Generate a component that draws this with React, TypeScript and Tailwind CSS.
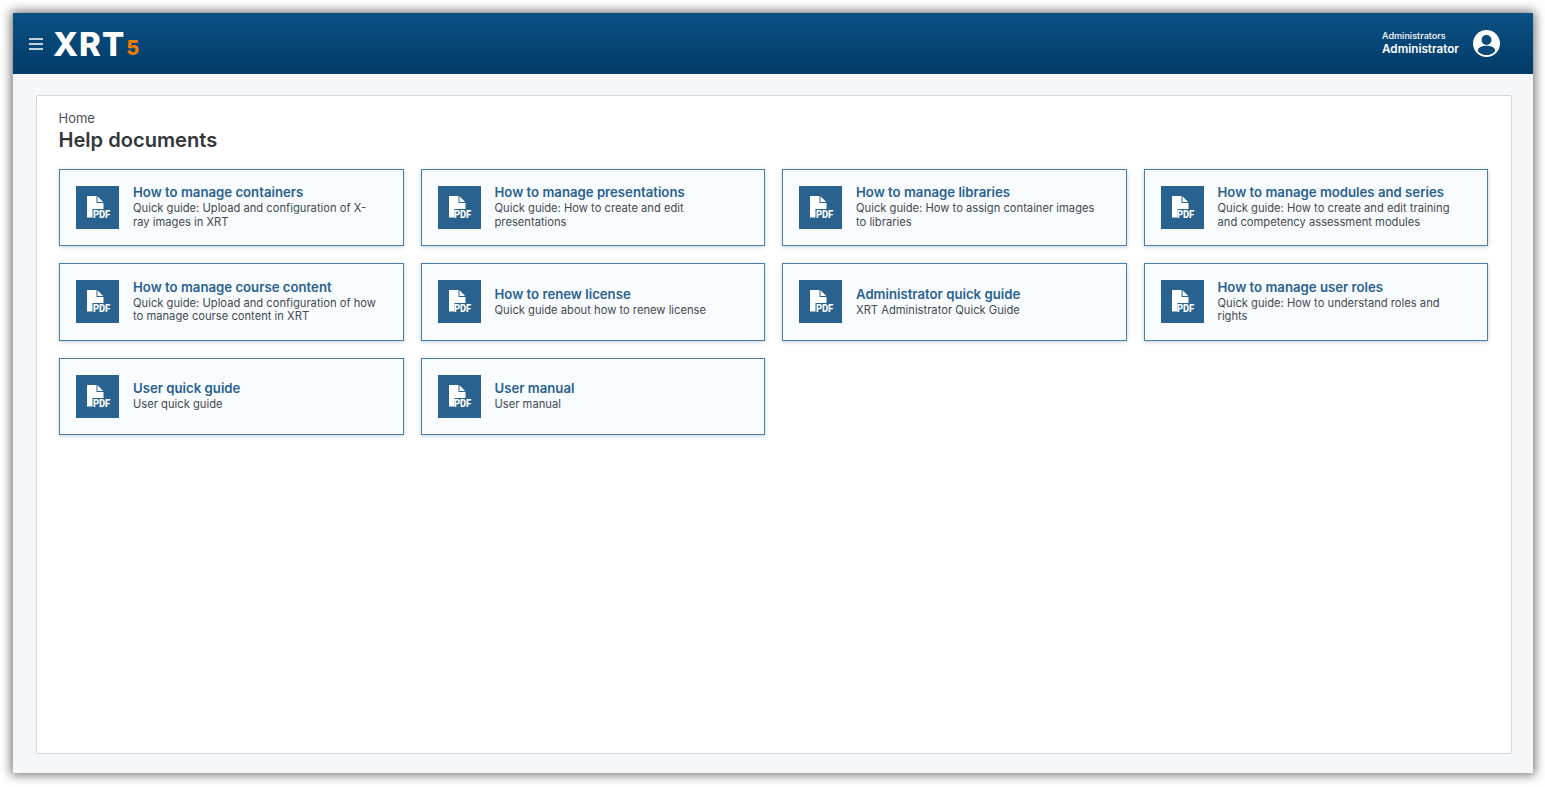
const docs = [
  { t: "How to manage containers", d: "Quick guide: Upload and configuration of X-ray images in XRT" },
  { t: "How to manage presentations", d: "Quick guide: How to create and edit presentations" },
  { t: "How to manage libraries", d: "Quick guide: How to assign container images to libraries" },
  { t: "How to manage modules and series", d: "Quick guide: How to create and edit training and competency assessment modules" },
  { t: "How to manage course content", d: "Quick guide: Upload and configuration of how to manage course content in XRT" },
  { t: "How to renew license", d: "Quick guide about how to renew license" },
  { t: "Administrator quick guide", d: "XRT Administrator Quick Guide" },
  { t: "How to manage user roles", d: "Quick guide: How to understand roles and rights" },
  { t: "User quick guide", d: "User quick guide" },
  { t: "User manual", d: "User manual" },
];

function PdfIcon() {
  return (
    <div className="relative w-[43px] h-[43px] shrink-0 bg-[#2a628f]">
      <svg viewBox="0 0 43 43" className="absolute inset-0 w-full h-full">
        <path d="M11 10h9.5v7h7v6H16.5v8.5H11z" fill="#fff" />
        <path d="M21.5 10.3l5.7 5.7h-5.7z" fill="#fff" />
      </svg>
      <span className="absolute left-[16.5px] top-[23px] text-[10.5px] leading-[11px] font-extrabold text-white tracking-[-0.1px] font-['Roboto',sans-serif] scale-x-90 origin-left">PDF</span>
    </div>
  );
}

function Card({ t, d }: { t: string; d: string }) {
  return (
    <div className="flex items-center gap-[14px] h-[77.5px] pl-[16px] pr-[24px] bg-[#f8fcff] border border-[#4f7ea5] shadow-[0_1px_4px_rgba(42,98,143,0.3)]">
      <PdfIcon />
      <div className="min-w-0 mb-[1px]">
        <div className="text-[13.2px] leading-[16px] font-semibold text-[#2a628f]">{t}</div>
        <div className="text-[11.2px] leading-[13.5px] text-[#444a50] mt-[2px]">{d}</div>
      </div>
    </div>
  );
}

export default function App() {
  return (
    <div className="w-[1545px] h-[787px] p-[13px] bg-white overflow-hidden font-['Inter',sans-serif]">
      <div className="w-[1520px] h-[760px] flex flex-col bg-[#f6f7f9] shadow-[0_0_10px_2px_rgba(0,0,0,0.55)]">
        <header className="h-[61px] shrink-0 flex items-center justify-between pl-[16px] pr-[33px] bg-gradient-to-b from-[#0b5185] to-[#033b68]">
          <div className="flex items-center">
            <svg width="14" height="12" viewBox="0 0 14 12" className="shrink-0">
              <path d="M0 1h14M0 6h14M0 11h14" stroke="#fff" strokeWidth="1.6" />
            </svg>
            <div className="flex items-end ml-[10px] font-extrabold leading-none">
              <span className="text-[33px] leading-[34px] text-white tracking-[1px]">XRT</span>
              <span className="text-[20px] leading-[20px] text-[#ef7d00] ml-[1px] mb-[3px]">5</span>
            </div>
          </div>
          <div className="flex items-center gap-[14px]">
            <div className="text-white">
              <div className="text-[9.1px] leading-[11px] font-medium">Administrators</div>
              <div className="text-[11.7px] leading-[16px] font-semibold">Administrator</div>
            </div>
            <svg width="27" height="27" viewBox="0 0 27 27" className="shrink-0">
              <defs>
                <clipPath id="c"><circle cx="13.5" cy="13.5" r="11.6" /></clipPath>
              </defs>
              <circle cx="13.5" cy="13.5" r="13.5" fill="#fff" />
              <circle cx="13.5" cy="10" r="5" fill="#0a4a7b" />
              <ellipse cx="13.5" cy="20.5" rx="8.7" ry="4.8" fill="#0a4a7b" clipPath="url(#c)" />
            </svg>
          </div>
        </header>
        <main className="flex-1 min-h-0 pt-[21px] pb-[19px] pl-[22.5px] pr-[21px]">
          <div className="h-full bg-white border border-[#d3d6db] rounded-[2px] pt-[14px] pl-[22px] pr-[23px]">
            <div className="text-[13px] leading-[16px] text-[#4a4f55]">Home</div>
            <h1 className="text-[20.1px] leading-[26px] font-semibold text-[#33373b] mt-[0.5px]">Help documents</h1>
            <div className="grid grid-cols-4 gap-[17px] mt-[16px] ml-[0.5px]">
              {docs.map((x) => (
                <Card key={x.t} t={x.t} d={x.d} />
              ))}
            </div>
          </div>
        </main>
      </div>
    </div>
  );
}
